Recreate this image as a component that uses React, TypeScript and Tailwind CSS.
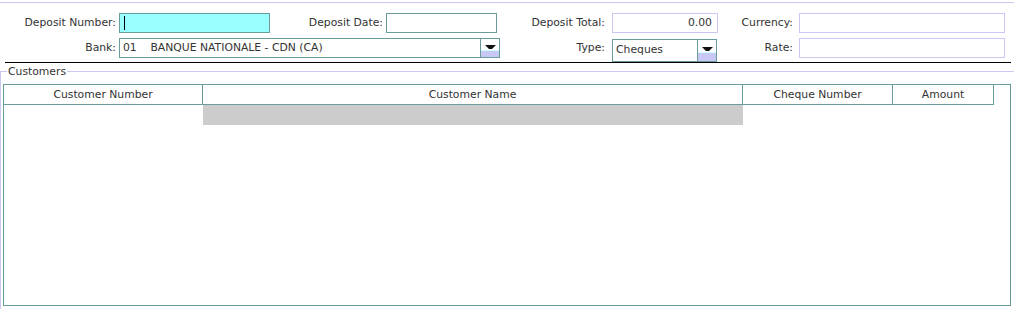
import React from 'react';

const teal = 'border-[#6a9c9c]';
const lav = 'border-[#c9c9f3]';

function Label({ w, pr = 'pr-[3px]', children }: { w: string; pr?: string; children: React.ReactNode }) {
  return <div className={`${w} ${pr} shrink-0 text-right leading-[20px]`}>{children}</div>;
}

function ComboArrow({ low }: { low: string }) {
  return (
    <div className={`w-[19px] h-full border-l ${teal} flex flex-col`}>
      <div className="flex-1 bg-white flex items-end justify-center pb-[1px]">
        <svg width="11" height="4" viewBox="0 0 11 4">
          <polygon points="0,0 11,0 7,4 4,4" fill="#111" />
        </svg>
      </div>
      <div className="h-px bg-[#ccffff]" />
      <div className={`${low} bg-[#c8c8f4]`} />
    </div>
  );
}

export default function App() {
  return (
    <div
      className="w-[1014px] h-[309px] bg-white text-[#333] text-[10.8px] overflow-hidden flex flex-col"
      style={{ fontFamily: '"DejaVu Sans", Verdana, sans-serif' }}
    >
      <div className="mt-[2px] h-px bg-[#c9c9f3]" />

      {/* row 1 */}
      <div className="mt-[10px] flex h-[20px] items-center">
        <Label w="w-[119px]">Deposit Number:</Label>
        <div className={`w-[151px] h-[20px] border ${teal} bg-[#99ffff] flex items-center pl-[4px]`}>
          <div className="w-px h-[14px] bg-black" />
        </div>
        <Label w="w-[116px]">Deposit Date:</Label>
        <div className={`w-[111px] h-[20px] border ${teal} bg-white`} />
        <Label w="w-[115px]" pr="pr-[7px]">Deposit Total:</Label>
        <div className={`w-[106px] h-[20px] border ${lav} bg-white text-right pr-[5px] leading-[18px]`}>0.00</div>
        <Label w="w-[81px]" pr="pr-[6px]">Currency:</Label>
        <div className={`w-[206px] h-[20px] border ${lav} bg-white`} />
      </div>

      {/* row 2 */}
      <div className="mt-[5px] flex h-[20px] items-start">
        <Label w="w-[119px]">Bank:</Label>
        <div className={`w-[381px] h-[20px] border ${teal} bg-white flex`}>
          <div className="flex-1 pl-[3px] leading-[18px] whitespace-pre">01    BANQUE NATIONALE - CDN (CA)</div>
          <ComboArrow low="h-[6px]" />
        </div>
        <Label w="w-[112px]" pr="pr-[7px]">Type:</Label>
        <div className={`mt-[1px] w-[105px] h-[23px] border ${teal} bg-white flex`}>
          <div className="flex-1 pl-[3px] leading-[20px]">Cheques</div>
          <ComboArrow low="h-[8px]" />
        </div>
        <Label w="w-[82px]" pr="pr-[6px]">Rate:</Label>
        <div className={`w-[206px] h-[20px] border ${lav} bg-white`} />
      </div>

      <div className="mt-[4px] ml-[5px] mr-[3px] h-px bg-black" />

      {/* customers group */}
      <fieldset className={`mt-[2px] flex-1 border-t border-l ${lav} pl-[2px] pt-[6px] min-w-0`}>
        <legend className="ml-[4px] px-px leading-[13px]">Customers</legend>
        <div className={`w-[1008px] h-[222px] border ${teal} flex flex-col`}>
          <div className="flex h-[20px]">
            <div className={`w-[199px] border-b border-r ${teal} text-center leading-[19px]`}>Customer Number</div>
            <div className={`w-[540px] border-b border-r ${teal} text-center leading-[19px]`}>Customer Name</div>
            <div className={`w-[150px] border-b border-r ${teal} text-center leading-[19px]`}>Cheque Number</div>
            <div className={`w-[101px] border-b border-r ${teal} text-center leading-[19px]`}>Amount</div>
          </div>
          <div className="flex h-[20px]">
            <div className="w-[199px]" />
            <div className="w-[540px] bg-[#cccccc]" />
          </div>
        </div>
      </fieldset>
    </div>
  );
}
